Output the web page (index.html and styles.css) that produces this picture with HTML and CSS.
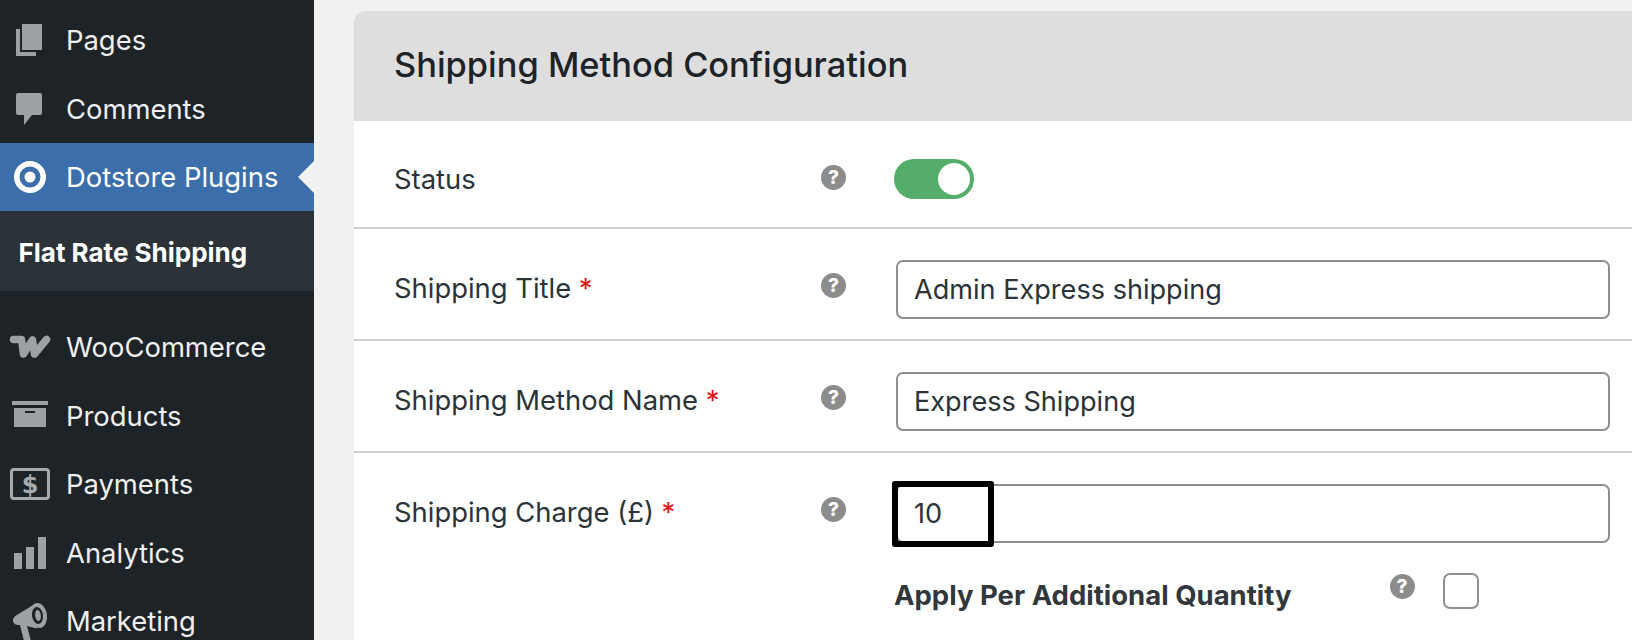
FILE: index.html
```html
<!DOCTYPE html>
<html lang="en">
<head>
<meta charset="utf-8">
<title>Shipping Method Configuration</title>
<link rel="stylesheet" href="styles.css">
</head>
<body>
<div class="page">
  <nav class="sidebar">
    <a class="item">
      <svg class="icon" viewBox="0 0 60 40"><path d="M22 4h20v26H22z"/><path d="M16 9h4v23h16v4H16z"/></svg>
      <span>Pages</span>
    </a>
    <a class="item">
      <svg class="icon" viewBox="0 0 60 40"><path d="M18 4h22a2 2 0 0 1 2 2v18a2 2 0 0 1-2 2h-8l-8 10v-10h-6a2 2 0 0 1-2-2V6a2 2 0 0 1 2-2z"/></svg>
      <span>Comments</span>
    </a>
    <a class="item active">
      <svg class="icon" viewBox="0 0 60 40"><circle cx="30" cy="20" r="16" fill="#fff"/><circle cx="30" cy="20" r="10.5" fill="#3b6eaa"/><circle cx="30" cy="20" r="5.5" fill="#fff"/></svg>
      <span>Dotstore Plugins</span>
      <i class="pointer"></i>
    </a>
    <div class="submenu">Flat Rate Shipping</div>
    <a class="item">
      <svg class="icon" viewBox="0 0 60 40"><polyline class="woo" points="13.500,12.500 21.500,12.500 23.500,27 32.500,13 34.500,27 46.500,12.500"/></svg>
      <span>WooCommerce</span>
    </a>
    <a class="item">
      <svg class="icon" viewBox="0 0 60 40"><path d="M12 5h36v4H12z"/><path fill-rule="evenodd" d="M14 12h32v19H14zM25 15v2h10v-2z"/></svg>
      <span>Products</span>
    </a>
    <a class="item">
      <svg class="icon" viewBox="0 0 60 40"><rect x="11.500" y="5.500" width="37" height="29" rx="2.500" fill="none" stroke="#a7aaad" stroke-width="3"/><text class="dollar" x="30" y="28.500" text-anchor="middle">$</text></svg>
      <span>Payments</span>
    </a>
    <a class="item">
      <svg class="icon" viewBox="0 0 60 40"><path d="M14 20h8v16h-8zM26 14h8v22h-8zM38 4h8v32h-8z"/></svg>
      <span>Analytics</span>
    </a>
    <a class="item">
      <svg class="icon" viewBox="0 0 60 40">
        <path d="M34 3.500 16 14.500c-2 1.200-3 3-3 4.800 0 2.700 2 4.700 5 4.700h2l4 16h7l-4-15 6 1.500c1.500.6 3 1 4.500.7z"/>
        <ellipse cx="38.500" cy="14.500" rx="8.500" ry="12.500" transform="rotate(-8 38.500 14.500)"/>
        <ellipse cx="37.500" cy="14.500" rx="5.500" ry="8.500" fill="#1d2327" transform="rotate(-8 37.500 14.500)"/>
        <ellipse cx="38" cy="14.500" rx="2.800" ry="5.500" transform="rotate(-8 38 14.500)"/>
      </svg>
      <span>Marketing</span>
    </a>
  </nav>
  <main class="main">
    <section class="panel">
      <h2 class="panel-title">Shipping Method Configuration</h2>
      <div class="row row-status">
        <div class="label">Status</div>
        <span class="help">?</span>
        <div class="control"><span class="toggle"><span class="knob"></span></span></div>
      </div>
      <div class="row">
        <div class="label">Shipping Title <b class="req">*</b></div>
        <span class="help">?</span>
        <div class="control"><input class="field" type="text" value="Admin Express shipping"></div>
      </div>
      <div class="row">
        <div class="label">Shipping Method Name <b class="req">*</b></div>
        <span class="help">?</span>
        <div class="control"><input class="field" type="text" value="Express Shipping"></div>
      </div>
      <div class="row row-last">
        <div class="label">Shipping Charge (£) <b class="req">*</b></div>
        <span class="help">?</span>
        <div class="control">
          <div class="field-wrap">
            <input class="field" type="text" value="10">
            <span class="highlight"></span>
          </div>
          <div class="extra">
            <strong class="extra-label">Apply Per Additional Quantity</strong>
            <span class="help help-extra">?</span>
            <span class="check"></span>
          </div>
        </div>
      </div>
    </section>
  </main>
</div>
</body>
</html>
```
FILE: styles.css
```css
* { box-sizing: border-box; }
html, body { margin: 0; height: 100%; }
body {
  background: #f1f1f1;
  font-family: Inter, "Liberation Sans", sans-serif;
  overflow: hidden;
}
.page { display: flex; height: 640px; overflow: hidden; }

.sidebar {
  flex: 0 0 314px;
  background: #1d2327;
  padding-top: 6px;
  color: #f0f0f1;
  font-size: 27.4px;
}
.item {
  position: relative;
  display: flex;
  align-items: center;
  height: 68.4px;
  padding-right: 0;
}
.item span { margin-left: 6px; }
.icon { flex: 0 0 60px; width: 60px; height: 40px; fill: #9ca1a6; }
.woo {
  fill: none;
  stroke: #9ca1a6;
  stroke-width: 7.5;
  stroke-linejoin: round;
  stroke-linecap: round;
}
.dollar { font: 700 24px "DejaVu Sans", sans-serif; fill: #a7aaad; }
.active { background: #3b6eaa; color: #fff; }
.pointer {
  position: absolute;
  right: 0;
  top: 50%;
  margin-top: -16px;
  border: 16px solid transparent;
  border-left: 0;
  border-right-color: #f1f1f1;
}
.submenu {
  height: 80px;
  margin-bottom: 22px;
  padding-left: 18.500px;
  background: #2c3338;
  color: #fff;
  font-size: 26px;
  font-weight: 700;
  line-height: 84px;
}

.main { flex: 1; min-width: 0; padding: 11px 0 0 40px; }
.panel {
  width: 1400px;
  height: 700px;
  background: #fff;
  border-radius: 10px 0 0 0;
}
.panel-title {
  margin: 0;
  height: 110px;
  padding-left: 40px;
  background: #dedede;
  border-radius: 10px 0 0 0;
  color: #1d2327;
  font-size: 34.4px;
  font-weight: 500;
  line-height: 108px;
}
.row {
  display: flex;
  align-items: flex-start;
  height: 112px;
  padding: 31px 0 0 40px;
  border-bottom: 2px solid #d0d0d0;
  color: #2c3338;
  font-size: 27.4px;
}
.row-status { height: 108px; padding-top: 31px; }
.row-status .label { line-height: 54px; }
.row-last { height: auto; border-bottom: 0; }
.label { flex: 0 0 427px; line-height: 56px; }
.req { color: #e01010; font-weight: 400; }
.help {
  flex: 0 0 25px;
  width: 25px;
  height: 25px;
  margin-top: 13px;
  border-radius: 50%;
  background: #8c8c8c;
  color: #fff;
  font-size: 19px;
  font-weight: 800;
  line-height: 25px;
  text-align: center;
}
.control { margin-left: 50px; width: 714px; }
.toggle {
  display: block;
  position: relative;
  width: 80px;
  height: 40px;
  margin: 7px 0 0 -2px;
  border-radius: 20px;
  background: #55ad6a;
}
.knob {
  position: absolute;
  top: 4px;
  right: 4px;
  width: 32px;
  height: 32px;
  border-radius: 50%;
  background: #fff;
}
.field {
  display: block;
  width: 714px;
  height: 59px;
  padding: 0 16px;
  border: 2px solid #8c8f94;
  border-radius: 7px;
  background: #fff;
  color: #2c3338;
  font: 27.1px Inter, "Liberation Sans", sans-serif;
}
.field-wrap { position: relative; }
.highlight {
  position: absolute;
  left: -4px;
  top: -3px;
  width: 102px;
  height: 66px;
  border: 6px solid #000;
  border-radius: 3px;
}
.extra { display: flex; align-items: flex-start; margin-top: 30px; }
.extra-label {
  flex: 0 0 495.500px;
  margin-left: -2px;
  color: #32373c;
  font-size: 27.5px;
  line-height: 44px;
}
.help-extra { margin-top: 1px; }
.check {
  width: 36px;
  height: 36px;
  margin-left: 28px;
  border: 2px solid #8c8f94;
  border-radius: 7px;
  background: #fff;
}
```
